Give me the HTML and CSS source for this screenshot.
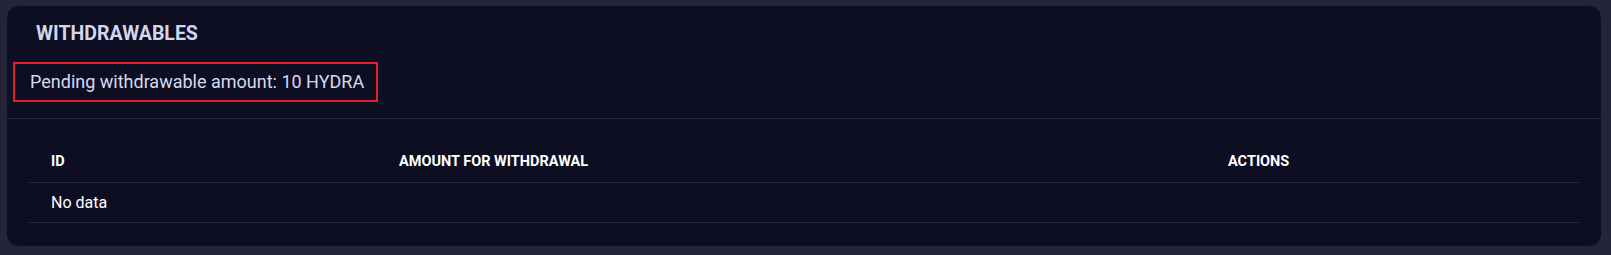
FILE: index.html
```html
<!DOCTYPE html>
<html>
<head>
<meta charset="utf-8">
<link rel="stylesheet" href="styles.css">
</head>
<body>
<div class="page">
  <section class="card">
    <h2 class="card-title">WITHDRAWABLES</h2>
    <div class="pending">Pending withdrawable amount: 10 HYDRA</div>
    <div class="divider"></div>
    <div class="table-wrap">
      <table class="data-table">
        <thead>
          <tr>
            <th class="col-id">ID</th>
            <th class="col-amount">AMOUNT FOR WITHDRAWAL</th>
            <th class="col-actions">ACTIONS</th>
          </tr>
        </thead>
        <tbody>
          <tr>
            <td colspan="3">No data</td>
          </tr>
        </tbody>
      </table>
    </div>
  </section>
</div>
</body>
</html>
```

FILE: styles.css
```css
* { box-sizing: border-box; }
html, body {
  margin: 0;
  padding: 0;
  background: #25253a;
  font-family: Roboto, "Liberation Sans", Arial, sans-serif;
}
.page {
  padding: 6px 10px 9px 7px;
}
.card {
  background: #0d0e21;
  border-radius: 12px;
  height: 240px;
  padding-top: 16px;
  overflow: hidden;
}
.card-title {
  margin: 0;
  padding-left: 29px;
  font-size: 19.5px;
  line-height: 24px;
  font-weight: 700;
  color: #d3d5ee;
}
.pending {
  margin: 16px 0 0 6px;
  width: 365px;
  height: 40px;
  border: 2px solid #e31d2b;
  padding-left: 15px;
  font-size: 18px;
  line-height: 36px;
  color: #d7d9f0;
}
.divider {
  margin-top: 16px;
  height: 1px;
  background: #2a2a3f;
}
.table-wrap {
  padding: 23px 22px 0 22px;
}
.data-table {
  width: 100%;
  border-collapse: collapse;
  table-layout: fixed;
}
.data-table th,
.data-table td {
  text-align: left;
  padding: 10px 22px 10px 22px;
  line-height: 20px;
  color: #ffffff;
  border-bottom: 1px solid #2a2a3f;
}
.data-table th {
  font-size: 14.5px;
  font-weight: 700;
}
.data-table td {
  font-size: 16px;
  font-weight: 400;
  padding-top: 10px;
  padding-bottom: 9px;
}
.col-id { width: 348px; }
.col-amount { width: 829px; }
.col-actions { width: auto; }
```
